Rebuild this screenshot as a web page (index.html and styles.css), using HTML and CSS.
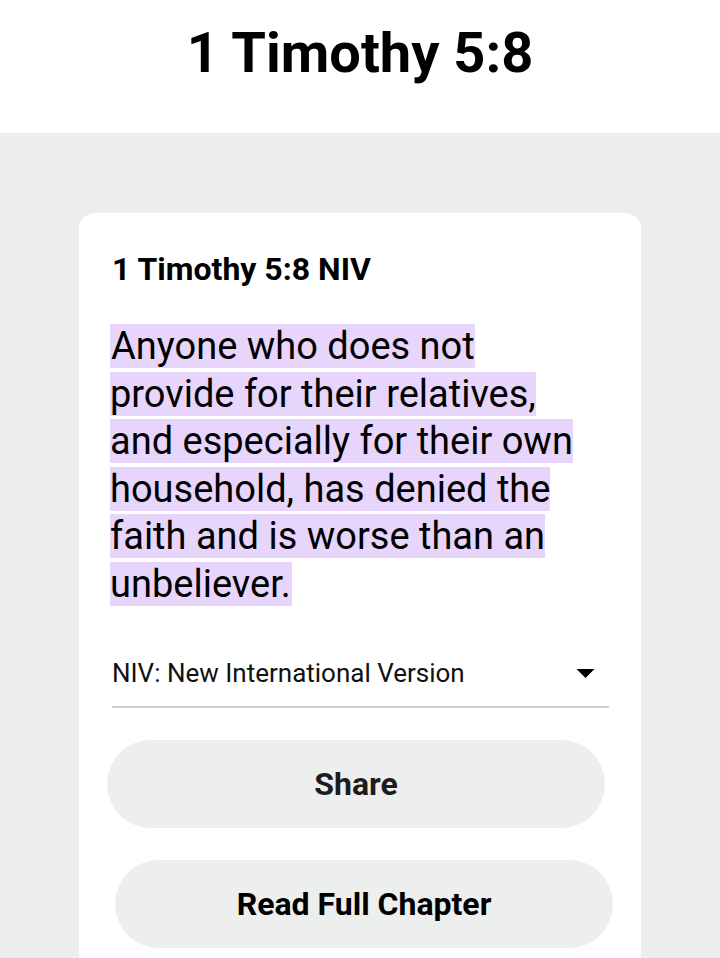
FILE: index.html
```html
<!DOCTYPE html>
<html>
<head>
<meta charset="utf-8">
<link rel="stylesheet" href="styles.css">
</head>
<body>
<header class="top">
  <h1 class="title">1 Timothy 5:8</h1>
</header>
<main class="stage">
  <section class="card">
    <h2 class="ref">1 Timothy 5:8 NIV</h2>
    <p class="verse"><span class="hl">Anyone who does not provide for their relatives, and especially for their own household, has denied the faith and is worse than an unbeliever.</span></p>
    <div class="select">
      <span class="select-label">NIV: New International Version</span>
      <svg class="caret" width="20" height="10" viewBox="0 0 20 10"><path d="M0 0 L20 0 L10 10 Z" fill="#000"/></svg>
    </div>
    <button class="btn btn-share">Share</button>
    <button class="btn btn-read">Read Full Chapter</button>
  </section>
</main>
</body>
</html>
```
FILE: styles.css
```css
html, body {
  margin: 0;
  padding: 0;
  height: 100%;
}
body {
  font-family: Roboto, "Noto Sans", sans-serif;
  background: #eceeed;
  color: #000;
  overflow: hidden;
}
.top {
  background: #fff;
  height: 133px;
  display: flex;
  justify-content: center;
}
.title {
  margin: 0;
  padding-top: 20px;
  font-size: 56px;
  font-weight: 700;
  line-height: 66px;
}
.stage {
  padding: 80px 79px 0 79px;
}
.card {
  background: #fff;
  border-radius: 16px;
  padding: 38px 32px 40px 33px;
  display: flex;
  flex-direction: column;
}
.ref {
  margin: 0;
  font-size: 32px;
  font-weight: 700;
  line-height: 36px;
}
.verse {
  margin: 36px 18px 0 -2px;
  font-size: 38px;
  line-height: 47.5px;
  font-weight: 400;
}
.hl {
  background: #e8d5fb;
  padding: 0 1px;
}
.select {
  margin-top: 38px;
  display: flex;
  align-items: center;
  justify-content: space-between;
  height: 54px;
  border-bottom: 2px solid #cfcfcf;
  padding-bottom: 6px;
  box-sizing: content-box;
}
.select-label {
  font-size: 26px;
  color: #111;
}
.caret {
  margin-right: 14px;
  width: 19px;
  height: 9px;
}
.btn {
  border: none;
  background: #edeeee;
  border-radius: 44px;
  height: 88px;
  width: 498px;
  font-family: Roboto, "Noto Sans", sans-serif;
  font-weight: 700;
  font-size: 32px;
  color: #1c1c1c;
}
.btn-share {
  margin-top: 32px;
  margin-left: -5px;
}
.btn-read {
  margin-top: 32px;
  margin-left: 3px;
  color: #000;
}
```
